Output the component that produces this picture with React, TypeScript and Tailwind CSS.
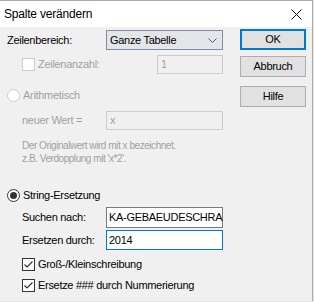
import React from "react";

function Check({ checked, disabled }: { checked?: boolean; disabled?: boolean }) {
  return (
    <div
      className={`w-[13px] h-[13px] border flex items-center justify-center shrink-0 ${
        disabled ? "border-[#cccccc] bg-[#ffffff]" : "border-[#333333] bg-white"
      }`}
    >
      {checked && (
        <svg width="11" height="11" viewBox="0 0 11 11">
          <path d="M1.5 5.5 L4 8 L9.5 2.5" fill="none" stroke="#333" strokeWidth="1.2" />
        </svg>
      )}
    </div>
  );
}

function Radio({ checked, disabled }: { checked?: boolean; disabled?: boolean }) {
  return (
    <div
      className={`w-[13px] h-[13px] rounded-full border flex items-center justify-center shrink-0 ${
        disabled ? "border-[#cccccc] bg-white" : "border-[#333333] bg-white"
      }`}
    >
      {checked && <div className="w-[7px] h-[7px] rounded-full bg-[#333333]" />}
    </div>
  );
}

function Btn({ label, def }: { label: string; def?: boolean }) {
  return (
    <div
      className={`w-[66px] h-[21px] bg-[#e1e1e1] flex items-center justify-center text-black font-normal ${
        def ? "border-2 border-[#0078d7]" : "border border-[#adadad]"
      }`}
    >
      {label}
    </div>
  );
}

export default function App() {
  return (
    <div
      className="w-[314px] h-[302px] bg-[#e8e8e8] text-[11px] tracking-[-0.3px] text-black"
      style={{ fontFamily: '"Liberation Sans", Arial, sans-serif' }}
    >
      <div className="w-[313px] h-[301px] bg-[#f0f0f0] border-t border-r border-[#aaaaaa] flex flex-col">
        {/* title bar */}
        <div className="h-[26px] bg-white flex items-center justify-between pl-[4px] pr-[10px] shrink-0">
          <span className="text-[12px] tracking-[-0.2px]">Spalte verändern</span>
          <svg width="11" height="11" viewBox="0 0 11 11">
            <path d="M0.5 0.5 L10.5 10.5 M10.5 0.5 L0.5 10.5" stroke="#111" strokeWidth="1" />
          </svg>
        </div>

        <div className="flex">
          {/* left column */}
          <div className="w-[223px] pl-[7px] flex flex-col">
            <div className="mt-[3px] h-[20px] flex items-center justify-between">
              <span>Zeilenbereich:</span>
              <div className="w-[117px] h-[20px] border border-[#7a8ea6] bg-[#e3e5e8] flex items-center justify-between pl-[3px] pr-[5px]">
                <span>Ganze Tabelle</span>
                <svg width="9" height="5" viewBox="0 0 9 5">
                  <path d="M0.5 0.5 L4.5 4.5 L8.5 0.5" fill="none" stroke="#555" strokeWidth="1" />
                </svg>
              </div>
            </div>

            <div className="mt-[5px] h-[19px] flex items-center">
              <div className="pl-[15px] flex items-center gap-[3px] text-[#a0a0a0]">
                <Check disabled />
                <span>Zeilenanzahl:</span>
              </div>
              <div className="ml-auto w-[66px] h-[19px] border border-[#cccccc] bg-[#f0f0f0] flex items-center pl-[3px] text-[#a0a0a0]">
                1
              </div>
            </div>

            <div className="mt-[15px] h-[13px] flex items-center gap-[3px] text-[#a0a0a0]">
              <Radio disabled />
              <span>Arithmetisch</span>
            </div>

            <div className="mt-[9px] h-[19px] flex items-center pl-[15px] text-[#a0a0a0]">
              <span>neuer Wert =</span>
              <div className="ml-auto w-[117px] h-[19px] border border-[#cccccc] bg-[#f0f0f0] flex items-center pl-[3px]">
                x
              </div>
            </div>

            <div className="mt-[9px] pl-[15px] text-[10px] tracking-[-0.45px] text-[#a0a0a0] leading-[13px]">
              <div>Der Originalwert wird mit x bezeichnet.</div>
              <div>z.B. Verdopplung mit 'x*2'.</div>
            </div>

            <div className="mt-[24px] h-[13px] flex items-center gap-[3px]">
              <Radio checked />
              <span>String-Ersetzung</span>
            </div>

            <div className="mt-[5px] h-[21px] flex items-center pl-[15px]">
              <span>Suchen nach:</span>
              <div className="ml-auto w-[117px] h-[21px] border border-[#7a7a7a] bg-white flex items-center pl-[2px] whitespace-nowrap">
                KA-GEBAEUDESCHRA
              </div>
            </div>

            <div className="mt-[2px] h-[20px] flex items-center pl-[15px]">
              <span>Ersetzen durch:</span>
              <div className="ml-auto w-[117px] h-[20px] border border-[#0078d7] bg-white flex items-center pl-[2px]">
                2014
              </div>
            </div>

            <div className="mt-[8px] h-[13px] flex items-center gap-[3px] pl-[15px]">
              <Check checked />
              <span>Groß-/Kleinschreibung</span>
            </div>

            <div className="mt-[8px] h-[13px] flex items-center gap-[3px] pl-[15px]">
              <Check checked />
              <span>Ersetze ### durch Nummerierung</span>
            </div>
          </div>

          {/* buttons */}
          <div className="ml-[17px] mt-[2px] flex flex-col">
            <Btn label="OK" def />
            <div className="mt-[6px]">
              <Btn label="Abbruch" />
            </div>
            <div className="mt-[9px]">
              <Btn label="Hilfe" />
            </div>
          </div>
        </div>
      </div>
    </div>
  );
}
